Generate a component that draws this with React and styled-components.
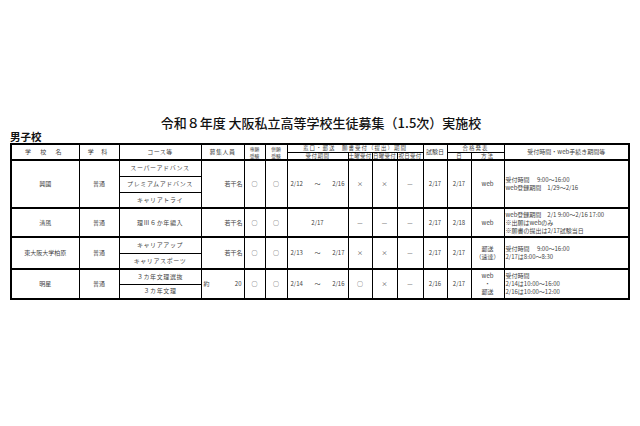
import React from "react";
import styled, { createGlobalStyle } from "styled-components";

const Global = createGlobalStyle`
  html, body { margin: 0; padding: 0; background: #fff; }
  body { font-family: "Noto Sans CJK JP", "Noto Sans", sans-serif; color: #222; }
`;

const Page = styled.div`
  width: 640px;
  height: 426px;
  box-sizing: border-box;
  padding: 116px 10px 0 10px;
  background: #fff;
`;

const Title = styled.h1`
  margin: 0;
  font-size: 13px;
  line-height: 14px;
  font-weight: 500;
  text-align: center;
  color: #111;
  padding-left: 2px;
`;

const Section = styled.h2`
  margin: 0;
  font-size: 10.5px;
  line-height: 13px;
  font-weight: 700;
  color: #111;
`;

const Table = styled.table`
  border-collapse: collapse;
  table-layout: fixed;
  width: 618px;
  border: 2px solid #000;
  font-size: 6px;
  color: #444;
`;

const Th = styled.th`
  border: 1px solid #000;
  padding: 0;
  font-weight: 400;
  font-size: ${(p) => p.$fs || 6}px;
  line-height: ${(p) => p.$lh || 6}px;
  letter-spacing: ${(p) => p.$ls || 0}px;
  text-align: center;
  vertical-align: middle;
  white-space: nowrap;
  overflow: hidden;
  border-bottom-width: ${(p) => (p.$bottom ? 2 : 1)}px;
`;

const Tr = styled.tr`
  height: ${(p) => p.$h}px;
`;

const Td = styled.td`
  border: 1px solid #000;
  border-top-width: ${(p) => (p.$first ? 2 : 1)}px;
  padding: 0 ${(p) => p.$px ?? 1}px;
  font-size: 6px;
  line-height: 8px;
  letter-spacing: ${(p) => p.$ls || 0}px;
  text-align: ${(p) => p.$align || "center"};
  vertical-align: middle;
  white-space: nowrap;
  overflow: hidden;
`;

const Split = styled.div`
  display: flex;
  justify-content: space-between;
  padding: 0 ${(p) => p.$px ?? 3}px;
`;

const Notes = styled.div`
  display: flex;
  flex-direction: column;
  line-height: 8px;
`;

const widths = [68, 40, 82, 43, 21, 22, 61, 24, 25, 26, 24, 24, 33, 125];

const rows = [
  {
    school: "興國",
    courses: ["スーパーアドバンス", "プレミアムアドバンス", "キャリアトライ"],
    sub: 16,
    quota: "若干名",
    period: ["2/12", "〜", "2/16"],
    sat: "×",
    sun: "×",
    hol: "—",
    exam: "2/17",
    day: "2/17",
    method: ["web"],
    notes: ["受付時間　 9:00〜16:00", "web登録期間　1/29〜2/16"],
  },
  {
    school: "清風",
    courses: ["理Ⅲ６か年編入"],
    sub: 29,
    quota: "若干名",
    period: ["2/17"],
    sat: "—",
    sun: "—",
    hol: "—",
    exam: "2/17",
    day: "2/18",
    method: ["web"],
    notes: [
      "web登録期間　2/1 9:00〜2/16 17:00",
      "※出願はwebのみ",
      "※願書の提出は2/17試験当日",
    ],
  },
  {
    school: "東大阪大学柏原",
    courses: ["キャリアアップ", "キャリアスポーツ"],
    sub: 16,
    quota: "若干名",
    period: ["2/13", "〜", "2/17"],
    sat: "×",
    sun: "×",
    hol: "—",
    exam: "2/17",
    day: "2/17",
    method: ["郵送", "（速達）"],
    notes: ["受付時間　 9:00〜16:00", "2/17は8:00〜8:30"],
  },
  {
    school: "明星",
    courses: ["３カ年文理選抜", "３カ年文理"],
    sub: 15,
    quota: ["約", "20"],
    period: ["2/14", "〜", "2/16"],
    sat: "○",
    sun: "×",
    hol: "—",
    exam: "2/16",
    day: "2/17",
    method: ["web", "・", "郵送"],
    notes: ["受付時間", "2/14は10:00〜16:00", "2/16は10:00〜12:00"],
  },
];

function Group({ r }) {
  const n = r.courses.length;
  const split = Array.isArray(r.quota);
  return (
    <>
      <Tr $h={r.sub}>
        <Td $first rowSpan={n}>{r.school}</Td>
        <Td $first rowSpan={n}>普通</Td>
        <Td $first $ls={0.6}>{r.courses[0]}</Td>
        <Td $first rowSpan={n} $align={split ? "left" : "right"} $px={split ? 0 : 1}>
          {split ? (
            <Split $px={2}>
              <span>{r.quota[0]}</span>
              <span>{r.quota[1]}</span>
            </Split>
          ) : (
            r.quota
          )}
        </Td>
        <Td $first rowSpan={n}>○</Td>
        <Td $first rowSpan={n}>○</Td>
        <Td $first rowSpan={n} $px={0}>
          {r.period.length > 1 ? (
            <Split>
              {r.period.map((t, i) => (
                <span key={i}>{t}</span>
              ))}
            </Split>
          ) : (
            r.period[0]
          )}
        </Td>
        <Td $first rowSpan={n}>{r.sat}</Td>
        <Td $first rowSpan={n}>{r.sun}</Td>
        <Td $first rowSpan={n}>{r.hol}</Td>
        <Td $first rowSpan={n}>{r.exam}</Td>
        <Td $first rowSpan={n}>{r.day}</Td>
        <Td $first rowSpan={n}>
          <Notes>
            {r.method.map((t, i) => (
              <span key={i}>{t}</span>
            ))}
          </Notes>
        </Td>
        <Td $first rowSpan={n} $align="left">
          <Notes>
            {r.notes.map((t, i) => (
              <span key={i}>{t}</span>
            ))}
          </Notes>
        </Td>
      </Tr>
      {r.courses.slice(1).map((c, i) => (
        <Tr key={i} $h={r.sub}>
          <Td $ls={0.6}>{c}</Td>
        </Tr>
      ))}
    </>
  );
}

export default function App() {
  return (
    <Page>
      <Global />
      <Title>令和８年度 大阪私立高等学校生徒募集（1.5次）実施校</Title>
      <Section>男子校</Section>
      <Table>
        <colgroup>
          {widths.map((w, i) => (
            <col key={i} style={{ width: w }} />
          ))}
        </colgroup>
        <thead>
          <Tr $h={7}>
            <Th rowSpan={2} $ls={4} $bottom>学 校 名</Th>
            <Th rowSpan={2} $ls={3} $bottom>学 科</Th>
            <Th rowSpan={2} $ls={0.5} $bottom>コース等</Th>
            <Th rowSpan={2} $ls={0.5} $bottom>募集人員</Th>
            <Th rowSpan={2} $fs={4.8} $lh={7} $bottom>専願<br />受験</Th>
            <Th rowSpan={2} $fs={4.8} $lh={7} $bottom>併願<br />受験</Th>
            <Th colSpan={4} $fs={5.5} $ls={1}>窓口・郵送　願書受付（提出）期間</Th>
            <Th rowSpan={2} $bottom>試験日</Th>
            <Th colSpan={2} $fs={5.5} $ls={1}>合格発表</Th>
            <Th rowSpan={2} $bottom>受付時間・web手続き期間等</Th>
          </Tr>
          <Tr $h={7}>
            <Th $fs={5.5} $ls={0.5} $bottom>受付期間</Th>
            <Th $fs={5.5} $ls={0.2} $bottom>土曜受付</Th>
            <Th $fs={5.5} $ls={0.2} $bottom>日曜受付</Th>
            <Th $fs={5.5} $ls={0.2} $bottom>祝日受付</Th>
            <Th $fs={5.5} $bottom>日</Th>
            <Th $fs={5.5} $ls={1} $bottom>方法</Th>
          </Tr>
        </thead>
        <tbody>
          {rows.map((r, i) => (
            <Group key={i} r={r} />
          ))}
        </tbody>
      </Table>
    </Page>
  );
}
